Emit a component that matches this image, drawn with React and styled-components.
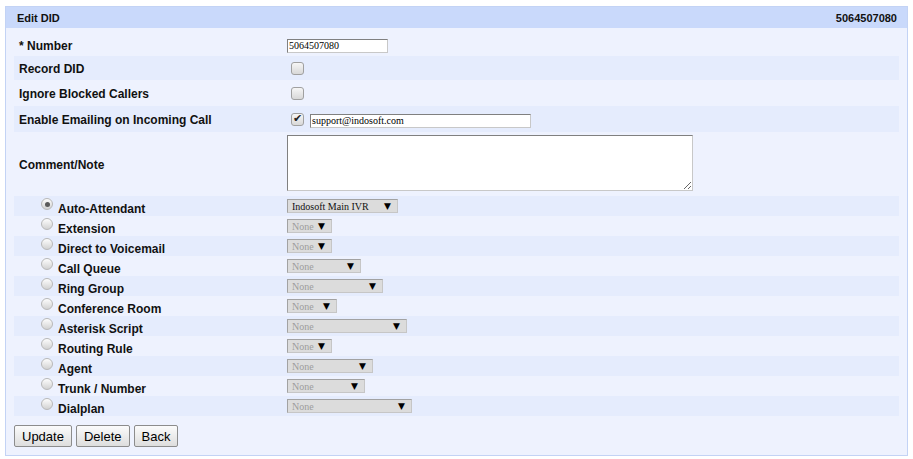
import React from "react"
import styled, { createGlobalStyle } from "styled-components"

//Global
const GlobalStyle = createGlobalStyle`
  body {
    margin: 0;
    background: #ffffff;
    font-family: "Liberation Sans", Arial, sans-serif;
  }
`

//Styled Components
const Panel = styled.div`
  box-sizing: border-box;
  width: 903px;
  margin: 6px 0 0 5px;
  border: 1px solid #c3d3f5;
  background: #eef2fe;
`

const Header = styled.div`
  height: 21px;
  display: flex;
  align-items: center;
  justify-content: space-between;
  padding: 0 10px 0 11px;
  background: #c9d9fb;
  font-size: 11px;
  font-weight: bold;
  color: #111;
`

const Body = styled.div`
  padding: 7px 8px 8px;
`

const Row = styled.div`
  display: grid;
  grid-template-columns: 273px 1fr;
  align-items: ${props => (props.$radio ? "start" : "center")};
  height: ${props => props.$h}px;
  background: ${props => (props.$shade ? "#e5ecfd" : "transparent")};
`

const Label = styled.div`
  padding: 1px 0 0 5px;
  font-size: 12px;
  font-weight: bold;
  color: #111;
`

const RadioLabel = styled.label`
  display: flex;
  align-items: flex-start;
  gap: 5px;
  padding-left: 27px;
  font-size: 12px;
  font-weight: bold;
  color: #111;
  span {
    padding-top: 6px;
    line-height: 14px;
  }
`

const Field = styled.div`
  display: flex;
  align-items: center;
  gap: 6px;
`

const TextBox = styled.input`
  box-sizing: border-box;
  width: ${props => props.$w}px;
  height: 14px;
  margin: ${props => props.$mt || 0}px 0 0 0;
  padding: 0 1px;
  border: 1px solid;
  border-color: #808080 #c8c8c8 #c8c8c8 #808080;
  background: #ffffff;
  color: #000;
  font: 10px "Liberation Serif", "Times New Roman", serif;
  outline: none;
`

const NoteBox = styled.textarea`
  box-sizing: border-box;
  width: 406px;
  height: 56px;
  margin: 0 0 2px 0;
  border: 1px solid;
  border-color: #808080 #c8c8c8 #c8c8c8 #808080;
  background: #ffffff;
  font: 10px "Liberation Serif", serif;
`

const Check = styled.input.attrs({ type: "checkbox" })`
  appearance: none;
  position: relative;
  box-sizing: border-box;
  width: 13px;
  height: 13px;
  margin: 0 0 0 4px;
  border: 1px solid #a0a0a0;
  border-radius: 3px;
  background: linear-gradient(#f6f6f6, #d8d8d8);
  &:checked::after {
    content: "✔";
    position: absolute;
    left: 1px;
    top: -2px;
    font: bold 11px "DejaVu Sans", sans-serif;
    color: #222;
  }
`

const Radio = styled.input.attrs({ type: "radio" })`
  appearance: none;
  position: relative;
  box-sizing: border-box;
  width: 12px;
  height: 12px;
  margin: 2px 0 0 0;
  border: 1px solid #b8b8b8;
  border-radius: 50%;
  background: linear-gradient(#fdfdfd, #d2d2d2);
  &:checked::after {
    content: "";
    position: absolute;
    left: 2.5px;
    top: 2.5px;
    width: 5px;
    height: 5px;
    border-radius: 50%;
    background: #5a5a5a;
  }
`

const Select = styled.div`
  box-sizing: border-box;
  width: ${props => props.$w}px;
  height: 14px;
  margin-top: 3px;
  display: flex;
  align-items: center;
  justify-content: space-between;
  padding: 0 6px 0 4px;
  background: #dcdcdc;
  border: 1px solid;
  border-color: #a2a2a2 #c6c6c6 #c6c6c6 #a2a2a2;
  font: 10px "Liberation Serif", "Times New Roman", serif;
  color: ${props => (props.$disabled ? "#9c9c9c" : "#111")};
  .arrow {
    font: 9px "DejaVu Sans", sans-serif;
    color: #000;
  }
`

const Buttons = styled.div`
  display: flex;
  gap: 4px;
  margin-top: 9px;
`

const Button = styled.button`
  height: 22px;
  padding: 0 7px;
  border: 1px solid #8c8c8c;
  border-radius: 2px;
  background: linear-gradient(#fbfbfb, #dddddd);
  font: 13px "Liberation Sans", Arial, sans-serif;
  color: #000;
`

const destinations = [
  { name: "Auto-Attendant", value: "Indosoft Main IVR", width: 111, checked: true },
  { name: "Extension", width: 45 },
  { name: "Direct to Voicemail", width: 45 },
  { name: "Call Queue", width: 74 },
  { name: "Ring Group", width: 96 },
  { name: "Conference Room", width: 50 },
  { name: "Asterisk Script", width: 120 },
  { name: "Routing Rule", width: 45 },
  { name: "Agent", width: 86 },
  { name: "Trunk / Number", width: 78 },
  { name: "Dialplan", width: 125 },
]

const App = () => {
  return (
    <>
      <GlobalStyle />
      <Panel>
        <Header>
          <span>Edit DID</span>
          <span>5064507080</span>
        </Header>
        <Body>
          <Row $h={21}>
            <Label>* Number</Label>
            <Field>
              <TextBox $w={101} defaultValue="5064507080" />
            </Field>
          </Row>
          <Row $h={24} $shade>
            <Label>Record DID</Label>
            <Field>
              <Check />
            </Field>
          </Row>
          <Row $h={26}>
            <Label>Ignore Blocked Callers</Label>
            <Field>
              <Check />
            </Field>
          </Row>
          <Row $h={26} $shade>
            <Label>Enable Emailing on Incoming Call</Label>
            <Field>
              <Check defaultChecked />
              <TextBox $w={221} $mt={3} defaultValue="support@indosoft.com" />
            </Field>
          </Row>
          <Row $h={64}>
            <Label>Comment/Note</Label>
            <Field>
              <NoteBox />
            </Field>
          </Row>
          {destinations.map((dest, i) => (
            <Row key={dest.name} $h={20} $radio $shade={i % 2 === 0}>
              <RadioLabel>
                <Radio name="destination" defaultChecked={dest.checked} />
                <span>{dest.name}</span>
              </RadioLabel>
              <div>
                <Select $w={dest.width} $disabled={!dest.value}>
                  <span>{dest.value || "None"}</span>
                  <span className="arrow">▼</span>
                </Select>
              </div>
            </Row>
          ))}
          <Buttons>
            <Button>Update</Button>
            <Button>Delete</Button>
            <Button>Back</Button>
          </Buttons>
        </Body>
      </Panel>
    </>
  )
}

export default App
